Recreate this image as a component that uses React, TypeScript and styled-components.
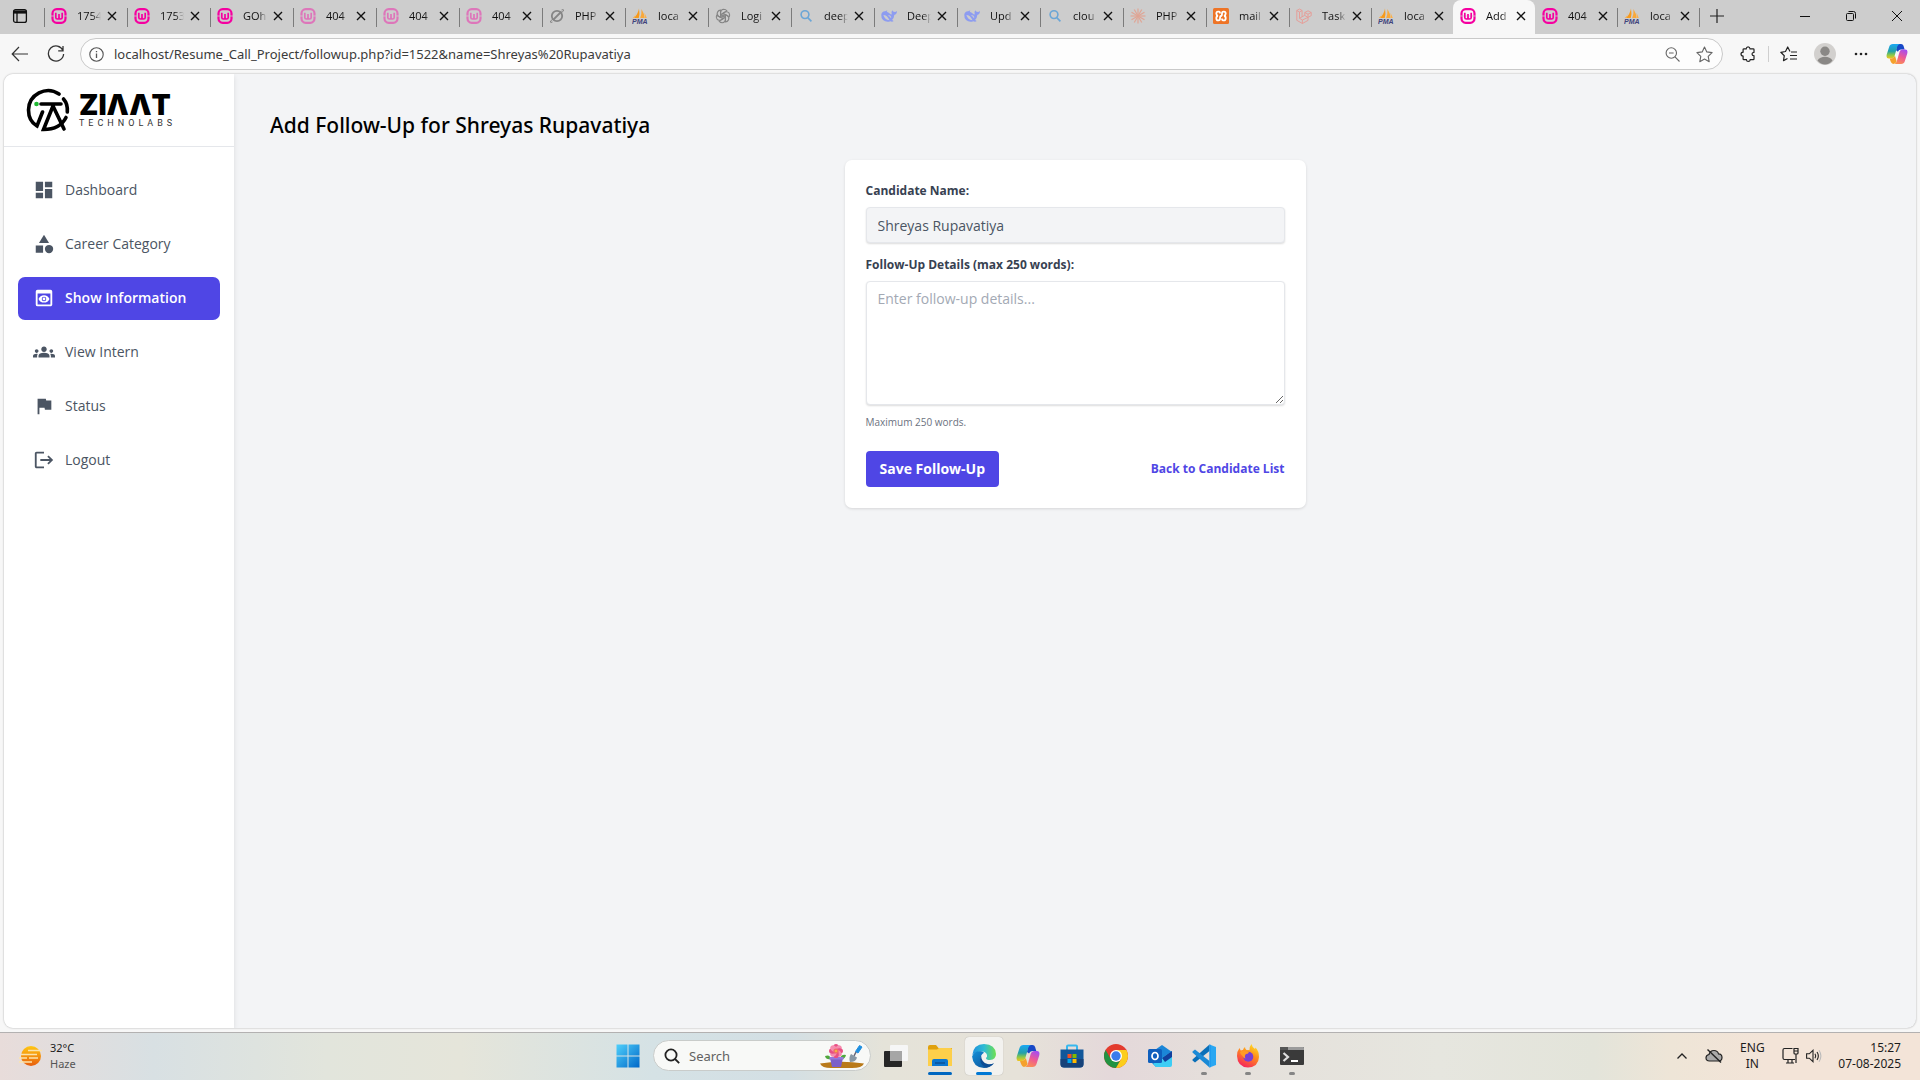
import React from 'react';
import styled, { createGlobalStyle, css } from 'styled-components';
import { MdDashboard, MdCategory, MdPreview, MdGroups, MdFlag, MdLogout } from 'react-icons/md';

const ui = '"Open Sans", "Noto Sans", sans-serif';
const uiWide = '"Noto Sans", "Open Sans", sans-serif';

const GlobalStyle = createGlobalStyle`
  *, *::before, *::after { box-sizing: border-box; }
  body { margin: 0; font-family: ${ui}; background: #f7f7f7; }
  button, input, textarea { font-family: inherit; }
  button { border: 0; padding: 0; background: none; color: inherit; }
  svg { display: block; flex: none; }
`;

/* ---------- layout shells ---------- */
const Screen = styled.div`
  display: flex;
  flex-direction: column;
  min-height: 100vh;
`;

/* ---------- tab strip ---------- */
const TitleBar = styled.header`
  display: flex;
  height: 34px;
  padding-bottom: 2px;
  background: #cdcdcd;
  color: #111;
`;
const TabMenu = styled.button`
  width: 44px;
  padding-left: 12px;
`;
const TabList = styled.ul`
  display: flex;
  margin: 0 0 -2px;
  padding: 0;
  list-style: none;
`;
const TabItem = styled.li<{ $active?: boolean; $bare?: boolean }>`
  display: flex;
  align-items: center;
  width: 83px;
  padding: 0 0 2px 7px;
  background: linear-gradient(#7b7b7b, #7b7b7b) left 8px / 1px 19px no-repeat;
  &:nth-child(n + 16) { width: 82px; }
  ${p => p.$bare && css`background: none;`}
  ${p => p.$active && css`
    background: #f7f7f7;
    border-radius: 8px 8px 0 0;
  `}
`;
const TabIcon = styled.span<{ $faded?: boolean }>`
  opacity: ${p => (p.$faded ? 0.42 : 1)};
`;
const TabTitle = styled.button`
  width: 24px;
  height: 16px;
  margin-left: 10px;
  overflow: hidden;
  font-size: 11px;
  line-height: 16px;
  text-align: left;
  white-space: nowrap;
  mask-image: linear-gradient(90deg, #000 65%, transparent);
`;
const TabClose = styled.button`
  margin-left: 6px;
`;
const NewTab = styled.button`
  display: grid;
  place-items: center;
  width: 36px;
  background: linear-gradient(#7b7b7b, #7b7b7b) left 8px / 1px 19px no-repeat;
`;
const WindowControls = styled.div`
  display: flex;
  margin-left: auto;
`;
const WindowButton = styled.button`
  display: grid;
  place-items: center;
  width: 46px;
`;

/* ---------- address bar ---------- */
const Toolbar = styled.div`
  display: flex;
  align-items: center;
  height: 40px;
  padding-left: 2px;
  padding-right: 5px;
  color: #333;
`;
const ToolButton = styled.button<{ $w?: number }>`
  display: grid;
  place-items: center;
  width: ${p => p.$w ?? 36}px;
  height: 32px;
`;
const AddressBar = styled.div`
  display: flex;
  flex: 1;
  align-items: center;
  height: 32px;
  margin: 0 7px 0 6px;
  padding-left: 8px;
  padding-right: 2px;
  border: 1px solid #c9c9c9;
  border-radius: 16px;
  background: #fdfdfd;
  color: #555;
`;
const AddressInput = styled.input`
  flex: 1;
  min-width: 0;
  padding: 0;
  margin-left: 10px;
  border: 0;
  outline: 0;
  background: none;
  color: #3b3b3b;
  font-family: ${uiWide};
  font-size: 13px;
  line-height: 20px;
`;
const ToolDivider = styled.span`
  width: 1px;
  height: 16px;
  margin: 0 2px;
  background: #cfcfcf;
`;

/* ---------- web page ---------- */
const PageFrame = styled.div`
  display: flex;
  flex: 1;
  margin: 0 4px 4px;
  overflow: hidden;
  border-radius: 9px;
  background: #f3f4f6;
  box-shadow: 0 0 2px rgba(0, 0, 0, 0.35);
`;
const Sidebar = styled.aside`
  width: 230px;
  background: #fff;
  box-shadow: 0 2px 5px rgba(0, 0, 0, 0.1);
`;
const Brand = styled.div`
  display: flex;
  align-items: center;
  height: 73px;
  padding-left: 22px;
  border-bottom: 1px solid #e5e7eb;
`;
const BrandWords = styled.div`
  margin-left: 9px;
  color: #000;
  font-family: Inter, sans-serif;
`;
const BrandName = styled.div`
  font-size: 28px;
  font-weight: 900;
  line-height: 26px;
`;
const BrandSub = styled.div`
  color: #333;
  font-family: Roboto, sans-serif;
  font-size: 9px;
  letter-spacing: 4px;
  line-height: 10px;
`;
const Nav = styled.nav`
  display: flex;
  flex-direction: column;
  gap: 11px;
  padding: 22px 14px;
`;
const NavLink = styled.a<{ $active?: boolean }>`
  display: flex;
  align-items: center;
  gap: 10px;
  height: 43px;
  padding: 0 15px 2px;
  border-radius: 7px;
  color: ${p => (p.$active ? '#fff' : '#4b5563')};
  background: ${p => (p.$active ? '#4f46e5' : 'transparent')};
  font-size: 14px;
  font-weight: ${p => (p.$active ? 600 : 400)};
  line-height: 20px;
  text-decoration: none;
`;
const Main = styled.main`
  flex: 1;
  padding: 35px 36px;
`;
const Heading = styled.h1`
  margin: 0 0 19px;
  color: #000;
  font-family: ${uiWide};
  font-size: 21px;
  font-weight: 500;
  line-height: 32px;
`;
const Card = styled.form`
  display: flex;
  flex-direction: column;
  max-width: 461px;
  margin: 0 auto;
  padding: 21px;
  border-radius: 7px;
  background: #fff;
  box-shadow: 0 1px 3px rgba(0, 0, 0, 0.12);
`;
const Label = styled.label`
  margin-bottom: 6px;
  color: #374151;
  font-size: 12px;
  font-weight: 700;
  line-height: 20px;
`;
const field = css`
  width: 100%;
  padding: 7px 11px;
  border: 1px solid #e5e7eb;
  border-radius: 4px;
  box-shadow: 0 1px 2px rgba(0, 0, 0, 0.14);
  color: #4b5563;
  font-size: 14px;
  line-height: 20px;
  outline: 0;
`;
const TextField = styled.input`
  ${field}
  height: 36px;
  margin-bottom: 12px;
  background: #f3f4f6;
`;
const TextBox = styled.textarea`
  ${field}
  height: 124px;
  background: #fff;
  resize: both;
  &::placeholder { color: #a3a9b4; opacity: 1; }
`;
const Hint = styled.p`
  margin: 8px 0 20px;
  color: #6b7280;
  font-size: 10px;
  line-height: 18px;
`;
const Actions = styled.div`
  display: flex;
  align-items: center;
  justify-content: space-between;
`;
const SaveButton = styled.button`
  height: 36px;
  padding: 0 14px;
  border-radius: 4px;
  background: #4f46e5;
  color: #fff;
  font-size: 14px;
  font-weight: 700;
  line-height: 20px;
`;
const BackLink = styled.a`
  color: #4f46e5;
  font-size: 12px;
  font-weight: 700;
  line-height: 20px;
  text-decoration: none;
`;

/* ---------- taskbar ---------- */
const Taskbar = styled.footer`
  display: grid;
  grid-template-columns: 1fr auto 1fr;
  align-items: center;
  height: 48px;
  padding-bottom: 2px;
  border-top: 1px solid #b3b1b1;
  background: linear-gradient(90deg, #e8dcda 0%, #d8e0e3 8%, #e2e5dc 17%, #e5e5da 24%, #d5e2e5 34%, #d3dfe4 41%, #e5e3d9 46%, #e6e2d9 53%, #e4d8da 58%, #e5e0db 64%, #e6e6df 75%, #e3e4da 83%, #eee5d7 87%, #f3e4d8 92%, #f3e4d8 100%);
  color: #1c1c1c;
  font-family: ${uiWide};
  font-size: 12px;
  line-height: 16px;
`;
const Weather = styled.button`
  display: flex;
  align-items: center;
  gap: 8px;
  padding-left: 18px;
  font-size: 11px;
  line-height: 16px;
  text-align: left;
`;
const Muted = styled.span`
  display: block;
  color: #555;
`;
const Dock = styled.div`
  display: flex;
  align-items: center;
  gap: 6px;
`;
const DockButton = styled.button<{ $open?: boolean }>`
  position: relative;
  display: grid;
  place-items: center;
  width: 38px;
  height: 38px;
  border-radius: 4px;
  background: ${p => (p.$open ? '#f3f2ef' : 'none')};
  box-shadow: ${p => (p.$open ? '0 0 1px rgba(0,0,0,.3)' : 'none')};
`;
const RunMark = styled.span<{ $w: number; $c: string }>`
  position: absolute;
  bottom: 0;
  left: 50%;
  width: ${p => p.$w}px;
  height: 3px;
  margin-left: ${p => -p.$w / 2}px;
  border-radius: 2px;
  background: ${p => p.$c};
`;
const SearchBox = styled.label`
  display: flex;
  align-items: center;
  width: 218px;
  height: 31px;
  padding: 0 5px 0 10px;
  border: 1px solid #c9ccca;
  border-radius: 16px;
  background: #f8f9f7;
`;
const SearchInput = styled.input`
  flex: 1;
  min-width: 0;
  margin-left: 9px;
  padding: 0;
  border: 0;
  outline: 0;
  background: none;
  font-size: 13px;
  line-height: 18px;
  &::placeholder { color: #626262; opacity: 1; }
`;
const Tray = styled.div`
  display: flex;
  align-items: center;
  justify-content: flex-end;
  padding-right: 19px;
`;
const TrayButton = styled.button<{ $w: number }>`
  display: grid;
  place-items: center;
  width: ${p => p.$w}px;
  font-size: 12px;
  line-height: 16px;
`;
const Clock = styled.div`
  margin-left: 16px;
  text-align: right;
`;

/* ---------- favicons ---------- */
const Wamp = () => (
  <svg width="16" height="16" viewBox="0 0 16 16" fill="none">
    <rect x="1.500" y="1.200" width="13" height="13.600" rx="4.200" stroke="#f500a0" strokeWidth="2.200" />
    <path d="M0 8h16" stroke="#cdcdcd" strokeWidth="0.800" />
    <path d="M4.800 4.800v4.600q0 1.600 1.600 1.600T8 9.400V6M8 9.400q0 1.600 1.600 1.600t1.600-1.600V4.800" stroke="#f500a0" strokeWidth="1.700" />
  </svg>
);
const Pma = () => (
  <svg width="16" height="16" viewBox="0 0 16 16">
    <path d="M7 0.500Q8 6 6.800 10H2Q6 6 7 .500Z" fill="#f79a1c" />
    <path d="M9.500 1Q12.500 6 12.600 10H8.200Q9.800 6 9.500 1Z" fill="#f9a83a" />
    <path d="M3.600 4.500Q3.600 8 .8 10h2Z M12.600 5Q14 8 14.800 10h-2Z" fill="#fbb04a" />
    <text x="0" y="15.800" fontFamily="Liberation Sans, sans-serif" fontWeight="700" fontStyle="italic" fontSize="7" fill="#40427c">PMA</text>
  </svg>
);
const Ban = () => (
  <svg width="16" height="16" viewBox="0 0 16 16" fill="none" stroke="#858585" strokeWidth="1.800">
    <circle cx="8" cy="8" r="5.200" /><path d="M4 12 12.500 3.500" />
    <path d="M3.500 14Q1 15.500 1.500 13L4 11M12.500 2Q15 .6 14.500 3L12 5" strokeWidth="1" />
  </svg>
);
const Knot = () => (
  <svg width="16" height="16" viewBox="0 0 16 16" fill="none" stroke="#858585" strokeWidth="1.100">
    {[0, 60, 120, 180, 240, 300].map(a => (
      <path key={a} transform={`rotate(${a} 8 8)`} d="M5.600 9.500V4.200Q6 1.600 8.600 1.300q2.200 0 3.200 1.600L8 5.200v2.600" />
    ))}
  </svg>
);
const Lens = () => (
  <svg width="16" height="16" viewBox="0 0 16 16" fill="none" stroke="#6ba6d6" strokeWidth="1.600">
    <circle cx="7" cy="6.600" r="3.900" /><path d="m9.800 9.600 3.600 3.800" />
  </svg>
);
const Whale = () => (
  <svg width="16" height="16" viewBox="0 0 17 16">
    <path d="M.3 6.800Q.8 2.800 4.500 3q.8-.8 2.200-.8l-.6 1.300Q8.500 4.200 9.800 6q1.200.8 1.600-.2Q10.600 3.500 12 1.800q.8 1.600 2 1.800 1.500.3 3-1-.1 3.600-2.900 4.300-.2 3.400-2.200 5.200.5.900 1.600 1.200-1.700 1.300-3.500.3Q5.500 15.300 2.200 12.300 0 10 .3 6.800Z" fill="#8d9cf0" />
    <path d="M2.500 7q4 0 6.500 5.500Q4 12 2.500 7Z" fill="#cdcdcd" /><path d="M8 7.500q2 .2 2.500 2.200" stroke="#cdcdcd" strokeWidth="1.200" fill="none" />
  </svg>
);
const Burst = () => (
  <svg width="16" height="16" viewBox="0 0 16 16" stroke="#dfa595" strokeWidth="1.200">
    {[0, 30, 60, 90, 120, 150].map(a => (
      <path key={a} transform={`rotate(${a} 8 8)`} d="M8 .5v15" />
    ))}
  </svg>
);
const Xampp = () => (
  <svg width="16" height="16" viewBox="0 0 16 16" fill="none">
    <rect width="16" height="16" rx="1.500" fill="#ee7426" />
    <path d="M6 3.600H5Q3.300 3.600 3.300 5.600T5 8Q3.300 8 3.300 10.200T5 12.400h.5Q7 12.400 7 10.500 7 8 8 8t1-2.500q0-1.900 1.500-1.900h.5q1.700 0 1.700 2T11 8q1.700 0 1.700 2.200T11 12.400h-1M6 3.600Q7 3.600 7 5.500M9 10.500q0 1.900 1 1.900" stroke="#fff" strokeWidth="1.800" />
  </svg>
);
const Cubes = () => (
  <svg width="16" height="16" viewBox="0 0 16 16" fill="none" stroke="#e89a94" strokeWidth="0.900">
    <path d="M.8 2.500 3.500 1l2.600 1.500v6.300l2.700-1.500V4.500L12 2.800l3.200 1.700v3.200L12 9.400v3l-5.600 3.100-5.600-3.200ZM.8 2.500l2.700 1.500v6.300L6.400 12v3.500M3.500 10.300l2.600-1.500M6.400 12 12 9.400M8.800 4.500 12 6.200l3.200-1.700M12 6.200v3.200L8.800 7.500M3.500 4l2.600-1.500" />
  </svg>
);

const CloseGlyph = () => (
  <svg width="10" height="10" viewBox="0 0 10 10" stroke="#111" strokeWidth="1.400"><path d="m1 1 8 8M9 1 1 9" /></svg>
);

/* Copilot ribbon, shared by the toolbar and the dock */
const Copilot = ({ id, size = 24 }: { id: string; size?: number }) => (
  <svg width={size} height={size} viewBox="0 0 24 24">
    <defs>
      <linearGradient id={id + 'a'} x1="0" y1="0" x2="0" y2="1">
        <stop offset="0" stopColor="#1ba8f5" /><stop offset="0.500" stopColor="#23a0a8" /><stop offset="0.750" stopColor="#8ac84a" /><stop offset="1" stopColor="#f5c51c" />
      </linearGradient>
      <linearGradient id={id + 'b'} x1="0.700" y1="0" x2="0.300" y2="1">
        <stop offset="0" stopColor="#a64df0" /><stop offset="0.500" stopColor="#ee5a94" /><stop offset="1" stopColor="#fb9150" />
      </linearGradient>
    </defs>
    <path d="M12 1h4.500q2 0 2.600 2l1.200 4h-4Q14 7 13 9.500L11 8Z" fill="#1748c7" />
    <path d="M7.500 1H15q-2 .5-2.800 3L9.500 13.500q-.8 3.500-4 3.500H3Q-.2 17 .8 12.500L3.500 4Q4.400 1 7.500 1Z" fill={`url(#${id}a)`} />
    <path d="M16.500 23H9q2-.5 2.800-3l2.700-9.500q.8-3.500 4-3.500H21q3.200 0 2.200 4.500L20.500 20q-.9 3-4 3Z" fill={`url(#${id}b)`} />
    <path d="M4 17h2q2.500 0 3.800-3l1.800 6Q10.500 23 8 23 5.400 22.500 4 17Z" fill="#f5a12c" />
  </svg>
);

const TABS: { title: string; icon: () => React.JSX.Element; faded?: boolean }[] = [
  { title: '1754', icon: Wamp }, { title: '1753', icon: Wamp }, { title: 'GOh', icon: Wamp },
  { title: '404', icon: Wamp, faded: true }, { title: '404', icon: Wamp, faded: true }, { title: '404', icon: Wamp, faded: true },
  { title: 'PHP', icon: Ban }, { title: 'loca', icon: Pma }, { title: 'Logi', icon: Knot }, { title: 'deep', icon: Lens },
  { title: 'Deep', icon: Whale }, { title: 'Upd', icon: Whale }, { title: 'clou', icon: Lens }, { title: 'PHP', icon: Burst },
  { title: 'mail', icon: Xampp }, { title: 'Task', icon: Cubes }, { title: 'loca', icon: Pma }, { title: 'Add', icon: Wamp },
  { title: '404', icon: Wamp }, { title: 'loca', icon: Pma },
];
const ACTIVE_TAB = 17;

const NAV = [
  { label: 'Dashboard', Icon: MdDashboard },
  { label: 'Career Category', Icon: MdCategory },
  { label: 'Show Information', Icon: MdPreview, active: true },
  { label: 'View Intern', Icon: MdGroups },
  { label: 'Status', Icon: MdFlag },
  { label: 'Logout', Icon: MdLogout },
];

const LogoMark = () => (
  <svg width="44" height="44" viewBox="0 0 44 44" fill="none" stroke="#000" strokeWidth="3.600" strokeLinecap="round">
    <path d="M33 6A19.600 19.600 0 0 0 2.500 22Q2.500 33 11 38L16.500 24" />
    <path d="M37.500 11Q42 16 41.300 24" />
    <path d="M40 29.500Q34 41.500 17.500 41.500L27 18" />
    <path d="M27 18 38 41M15 16h20" />
    <circle cx="10.500" cy="16" r="2.300" fill="#1fb832" stroke="none" />
  </svg>
);

function TabStrip() {
  return (
    <TitleBar>
      <TabMenu aria-label="Tab actions">
        <svg width="16" height="16" viewBox="0 0 16 16" fill="none" stroke="#111" strokeWidth="1.300">
          <rect x="1.600" y="1.600" width="12.800" height="12.800" rx="2" /><path d="M1.600 4h12.800" strokeWidth="3.200" /><path d="M5 4v10" />
        </svg>
      </TabMenu>
      <TabList>
        {TABS.map(({ title, icon: Icon, faded }, i) => (
          <TabItem key={i} $active={i === ACTIVE_TAB} $bare={i === ACTIVE_TAB + 1}>
            <TabIcon $faded={faded}><Icon /></TabIcon>
            <TabTitle>{title}</TabTitle>
            <TabClose aria-label="Close tab"><CloseGlyph /></TabClose>
          </TabItem>
        ))}
      </TabList>
      <NewTab aria-label="New tab">
        <svg width="14" height="14" viewBox="0 0 14 14" stroke="#222" strokeWidth="1.200"><path d="M7 0v14M0 7h14" /></svg>
      </NewTab>
      <WindowControls>
        <WindowButton aria-label="Minimize"><svg width="10" height="10" viewBox="0 0 10 10" stroke="#111"><path d="M0 5.500h10" /></svg></WindowButton>
        <WindowButton aria-label="Restore">
          <svg width="10" height="10" viewBox="0 0 10 10" fill="none" stroke="#111"><rect x=".5" y="2.500" width="7" height="7" rx="1" /><path d="M2.500.500h5q2 0 2 2v5" /></svg>
        </WindowButton>
        <WindowButton aria-label="Close"><svg width="10" height="10" viewBox="0 0 10 10" stroke="#111"><path d="m0 0 10 10M10 0 0 10" /></svg></WindowButton>
      </WindowControls>
    </TitleBar>
  );
}

function AddressRow() {
  return (
    <Toolbar>
      <ToolButton aria-label="Back">
        <svg width="18" height="16" viewBox="0 0 18 16" fill="none" stroke="#333" strokeWidth="1.200"><path d="M17 8H1.500M8 1 1.200 8 8 15" /></svg>
      </ToolButton>
      <ToolButton aria-label="Reload">
        <svg width="18" height="18" viewBox="0 0 18 18" fill="none" stroke="#333" strokeWidth="1.300"><path d="M16 5.500A7.600 7.600 0 1 0 16.600 9M16 1v4.800h-4.800" /></svg>
      </ToolButton>
      <AddressBar>
        <svg width="15" height="15" viewBox="0 0 15 15" fill="none" stroke="#555" strokeWidth="1.100"><circle cx="7.500" cy="7.500" r="6.700" /><path d="M7.500 6.500v4.500M7.500 4v1.200" strokeWidth="1.300" /></svg>
        <AddressInput aria-label="Address" defaultValue="localhost/Resume_Call_Project/followup.php?id=1522&name=Shreyas%20Rupavatiya" />
        <ToolButton $w={32} aria-label="Zoom out">
          <svg width="15" height="15" viewBox="0 0 15 15" fill="none" stroke="#666" strokeWidth="1.100"><circle cx="6.300" cy="6" r="5.200" /><path d="m10 9.800 4.500 4.700M4 6h4.600" /></svg>
        </ToolButton>
        <ToolButton $w={32} aria-label="Add to favorites">
          <svg width="17" height="17" viewBox="0 0 17 17" fill="none" stroke="#666" strokeWidth="1.100" strokeLinejoin="round"><path d="m8.500 1 2.300 4.900 5.300.7-3.900 3.700 1 5.400-4.700-2.600-4.700 2.600 1-5.400L.9 6.600l5.300-.7Z" /></svg>
        </ToolButton>
      </AddressBar>
      <ToolButton aria-label="Extensions">
        <svg width="16" height="16" viewBox="0 0 16 16" fill="none" stroke="#222" strokeWidth="1.200"><path d="M3.500 2.800h2.700q.2-2 1.900-2t1.900 2h3.200q.8 0 .8.800v2.700q-2 .1-2 1.800t2 1.800v3q0 .8-.8.800h-3q-.2 1.700-1.900 1.700t-1.900-1.700H3.900q-.8 0-.8-.8v-2.700Q1 10 1 8.100t2.100-2V3.600q0-.8.8-.8Z" /></svg>
      </ToolButton>
      <ToolDivider />
      <ToolButton aria-label="Favorites">
        <svg width="18" height="16" viewBox="0 0 18 16" fill="none" stroke="#222" strokeWidth="1.200" strokeLinejoin="round"><path d="M10 5.500 7.700 1 5.500 5.500l-4.700.8 3.500 3.400-.8 4.900L7.500 12.500M11 6h6M10 9.500h7M10 13h7" /></svg>
      </ToolButton>
      <ToolButton aria-label="Profile">
        <svg width="22" height="22" viewBox="0 0 22 22"><circle cx="11" cy="11" r="11" fill="#d2d0ce" /><circle cx="11" cy="8.300" r="4.700" fill="#8a8886" /><path d="M3.500 17.500Q6 13.800 11 13.800t7.500 3.700Q15.500 21.500 11 21.500t-7.500-4Z" fill="#8a8886" /></svg>
      </ToolButton>
      <ToolButton aria-label="Settings and more">
        <svg width="14" height="4" viewBox="0 0 14 4" fill="#222"><circle cx="2" cy="2" r="1.300" /><circle cx="7" cy="2" r="1.300" /><circle cx="12" cy="2" r="1.300" /></svg>
      </ToolButton>
      <ToolButton aria-label="Copilot"><Copilot id="tool" size={22} /></ToolButton>
    </Toolbar>
  );
}

function WebPage() {
  return (
    <PageFrame>
      <Sidebar>
        <Brand>
          <LogoMark />
          <BrandWords>
            <BrandName>ZIΛΛT</BrandName>
            <BrandSub>TECHNOLABS</BrandSub>
          </BrandWords>
        </Brand>
        <Nav>
          {NAV.map(({ label, Icon, active }) => (
            <NavLink key={label} href="#" $active={active}><Icon size={22} />{label}</NavLink>
          ))}
        </Nav>
      </Sidebar>
      <Main>
        <Heading>Add Follow-Up for Shreyas Rupavatiya</Heading>
        <Card>
          <Label htmlFor="candidate">Candidate Name:</Label>
          <TextField id="candidate" readOnly value="Shreyas Rupavatiya" />
          <Label htmlFor="details">Follow-Up Details (max 250 words):</Label>
          <TextBox id="details" placeholder="Enter follow-up details..." />
          <Hint>Maximum 250 words.</Hint>
          <Actions>
            <SaveButton type="button">Save Follow-Up</SaveButton>
            <BackLink href="#">Back to Candidate List</BackLink>
          </Actions>
        </Card>
      </Main>
    </PageFrame>
  );
}

const icon24 = { width: 24, height: 24, viewBox: '0 0 24 24' };

const StartIcon = () => (
  <svg {...icon24}>
    <defs><linearGradient id="win" x1="0" y1="0" x2="1" y2="1"><stop offset="0" stopColor="#4fd0fb" /><stop offset="1" stopColor="#0067c8" /></linearGradient></defs>
    <path d="M.5.500h11v11H.5ZM12.500.500h11v11h-11ZM.5 12.500h11v11H.5ZM12.500 12.500h11v11h-11Z" fill="url(#win)" />
  </svg>
);
const Bouquet = () => (
  <svg width="46" height="24" viewBox="0 0 46 24">
    <path d="M1 19.500Q22 16 45 19.500q-2 4.500-12 4.500H12Q3 24 1 19.500Z" fill="#b97a1a" />
    <path d="M6 12q5-2 6 3-5 1-6-3ZM27 11q-5-1-6 4 5 1 6-4Z" fill="#4fa83a" />
    <path d="M11 14h13l-2 9h-9Z" fill="#7b5fc9" /><path d="M10.500 13h14v2.500h-14Z" fill="#9479dd" />
    <g>
      {[0, 45, 90, 135, 180, 225, 270, 315].map(a => (
        <ellipse key={a} cx="17" cy="3.600" rx="2.800" ry="3.600" transform={`rotate(${a} 17 7)`} fill={a % 90 ? '#f58cae' : '#e84f85'} />
      ))}
    </g>
    <circle cx="17" cy="7" r="2.600" fill="#f06a6a" /><circle cx="17" cy="7" r="1.300" fill="#f5b040" />
    <path d="m40.500 1.500 2.500 1.500-4 6-2.500-1.500Z" fill="#1e8fe0" stroke="#1e8fe0" strokeLinejoin="round" /><path d="m37 8-2 4" stroke="#667" strokeWidth="1.500" /><path d="m32 10 6 3.500q-1 4.500-7 4.500-1.500-4.500 1-8Z" fill="#8797a4" />
  </svg>
);
const TaskView = () => (
  <svg {...icon24}><rect x="0" y="7" width="18" height="16" rx="1" fill="#262626" /><rect x="6" y="1" width="18" height="16" rx="1" fill="#f6f6f6" /><path d="M6 7h12v10H6Z" fill="#a6a6a6" /></svg>
);
const Folder = () => (
  <svg {...icon24}><path d="M0 3q0-2 2-2h6l2.500 3H24v8H0Z" fill="#e0a10e" /><path d="M0 5.500h9L11 4h11.500Q24 4 24 5.500V22H0Z" fill="#fdcf4a" /><path d="M4 22v-5q0-2 2-2h12q2 0 2 2v5Z" fill="#0b76cf" /><path d="M7 18h10v2H7Z" fill="#0a5aa5" /></svg>
);
const EdgeIcon = () => (
  <svg {...icon24}>
    <defs>
      <linearGradient id="ed1" x1="0" y1="0.300" x2="1" y2="0.300"><stop offset="0" stopColor="#1f8fdc" /><stop offset="0.500" stopColor="#2fbcd4" /><stop offset="1" stopColor="#6fe04e" /></linearGradient>
      <linearGradient id="ed2" x1="0" y1="0" x2="1" y2="1"><stop offset="0" stopColor="#1390d8" /><stop offset="1" stopColor="#0c4a92" /></linearGradient>
    </defs>
    <path d="M.3 11Q1.500.200 12 0q11.500.5 12 10 0 5.500-6 6-4 0-4-2 1.500-1 1-3-1-3.500-5-3.500Q3 7.500.3 11Z" fill="url(#ed1)" />
    <path d="M.1 12.500Q2 6.500 9 7.200q2 .2 3 1.500-4 2-3 7 2 5.500 8.500 5 2.500-.3 4.500-1.500Q18.500 24 12 24 1 23.500.1 12.500Z" fill="url(#ed2)" />
    <path d="M9 11.500q-3 8.500 5 12 5-.8 8-4.300-3 1.500-6.500.8-6-1.500-6.500-8.500Z" fill="#0d4c94" />
  </svg>
);
const StoreIcon = () => (
  <svg {...icon24}>
    <path d="M7 6V2.500Q7 1.500 8 1.500h8q1 0 1 1V6" fill="none" stroke="#37b7ee" strokeWidth="2" />
    <path d="M.5 5.500h23V20q0 3.500-3.500 3.500H4Q.5 23.500.5 20Z" fill="#12579a" /><path d="M.5 15h23v5q0 3.500-3.500 3.500H4Q.5 23.500.5 20Z" fill="#174279" />
    <path d="M7.500 10H11.500v4h-4Z" fill="#f25022" /><path d="M12.500 10h4v4h-4Z" fill="#7fba00" /><path d="M7.500 15h4v4h-4Z" fill="#00a4ef" /><path d="M12.500 15h4v4h-4Z" fill="#ffb900" />
  </svg>
);
const ChromeIcon = () => (
  <svg {...icon24}>
    <circle cx="12" cy="12" r="12" fill="#e33b2e" />
    <path d="M1.600 6 6.800 15 12 18l-3 5.600A12 12 0 0 1 1.600 6Z" fill="#229342" /><path d="m7 15 5 3 4-1-4 7q-2 0-4-1Z" fill="#229342" />
    <path d="M17.200 15 12 24q11-.5 12-12 0-3-1.600-6H12Z" fill="#fccd1c" />
    <circle cx="12" cy="12" r="6" fill="#fff" /><circle cx="12" cy="12" r="4.700" fill="#3b7cec" />
  </svg>
);
const OutlookIcon = () => (
  <svg {...icon24}>
    <path d="M4 8 14 1l10 7v11l-6 4H8l-4-4Z" fill="#1b86d8" /><path d="M24 7v14q0 2-2 2H8l-3-3Z" fill="#3ccdf5" /><path d="M14 14 24 7v6l-7 5Z" fill="#123f9c" />
    <rect y="5" width="14" height="14" rx="1.500" fill="#0f5fbd" /><ellipse cx="7" cy="12" rx="3" ry="3.500" fill="none" stroke="#fff" strokeWidth="1.700" />
  </svg>
);
const CodeIcon = () => (
  <svg {...icon24}><path d="M17.500.500 24 3v18l-6.500 2.500Z" fill="#2aa7f2" /><path d="M17.500.500V7L3 18.500.500 16.500v-1Z" fill="#0a6fb8" /><path d="M17.500 23.500V17L3 5.500.500 7.500v1Z" fill="#1b8ad6" /><path d="M17.500.500 19 1v22l-1.500.500Z" fill="#1f9cf0" /></svg>
);
const FirefoxIcon = () => (
  <svg {...icon24}>
    <defs><linearGradient id="ff" x1="0.800" y1="0" x2="0.300" y2="1"><stop offset="0" stopColor="#ffe226" /><stop offset="0.450" stopColor="#ff8a1c" /><stop offset="1" stopColor="#f5215e" /></linearGradient></defs>
    <path d="M1 12Q1 7 3.500 4l1.200 2.500L7 6q.5-2 2-3 0 2 1.500 3h3Q13 3 15.500 0 16 3 19 5l.5-1.500Q23 7 23 13q-.5 10-11 10.500Q1.500 23 1 12Z" fill="url(#ff)" />
    <circle cx="12.300" cy="12.800" r="5" fill="#7a3fd3" /><path d="M4 8q3-2 6-.5 2 0 3 1-1.500 1.500-3 1.500-2 2-.5 4.500-2-.5-3-2.500Q4 10 4 8Z" fill="#ff9a26" />
  </svg>
);
const TerminalIcon = () => (
  <svg {...icon24}><path d="M0 4q0-1 1-1h22q1 0 1 1v16q0 1-1 1H1q-1 0-1-1Z" fill="#3a3a3a" /><path d="M8 3h15q1 0 1 1v2H8Z" fill="#9b9b9b" /><path d="M0 4q0-1 1-1h7v3H0Z" fill="#555" /><path d="m3.500 9 4.500 4-4.500 4" fill="none" stroke="#ddd" strokeWidth="2.200" /><path d="M11 17h7" stroke="#fff" strokeWidth="2" /></svg>
);
const WeatherIcon = () => (
  <svg width="24" height="24" viewBox="0 0 24 24">
    <defs><linearGradient id="sun" x1="0" y1="0" x2="0" y2="1"><stop offset="0" stopColor="#ffc814" /><stop offset="1" stopColor="#e85d0c" /></linearGradient></defs>
    <circle cx="13" cy="12" r="10" fill="url(#sun)" />
    <path d="M10 6.500h14M3 10.500h16M11 14h9M1 14h8M1 18h13" stroke="#fbe3ac" strokeWidth="1.400" />
  </svg>
);

const DOCK = [
  { name: 'Task View', Icon: TaskView },
  { name: 'File Explorer', Icon: Folder, mark: 24, color: '#0067c0' },
  { name: 'Edge', Icon: EdgeIcon, mark: 16, color: '#0078d4', open: true },
  { name: 'Copilot', Icon: () => <Copilot id="dock" /> },
  { name: 'Store', Icon: StoreIcon },
  { name: 'Chrome', Icon: ChromeIcon },
  { name: 'Outlook', Icon: OutlookIcon },
  { name: 'Code', Icon: CodeIcon, mark: 6, color: '#858585' },
  { name: 'Firefox', Icon: FirefoxIcon, mark: 6, color: '#858585' },
  { name: 'Terminal', Icon: TerminalIcon, mark: 6, color: '#858585' },
];

function BottomBar() {
  return (
    <Taskbar>
      <Weather><WeatherIcon /><span>32°C<Muted>Haze</Muted></span></Weather>
      <Dock>
        <DockButton aria-label="Start"><StartIcon /></DockButton>
        <SearchBox>
          <svg width="16" height="16" viewBox="0 0 16 16" fill="none" stroke="#222" strokeWidth="1.800"><circle cx="7" cy="7" r="5.600" /><path d="m11 11 4.200 4.200" /></svg>
          <SearchInput aria-label="Search" placeholder="Search" />
          <Bouquet />
        </SearchBox>
        {DOCK.map(({ name, Icon, mark, color, open }) => (
          <DockButton key={name} aria-label={name} $open={open}>
            <Icon />
            {mark && <RunMark $w={mark} $c={color!} />}
          </DockButton>
        ))}
      </Dock>
      <Tray>
        <TrayButton $w={32} aria-label="Show hidden icons"><svg width="10" height="6" viewBox="0 0 10 6" fill="none" stroke="#222" strokeWidth="1.300"><path d="m.500 5.500 4.500-4.500 4.500 4.500" /></svg></TrayButton>
        <TrayButton $w={32} aria-label="Cloud sync off">
          <svg width="18" height="14" viewBox="0 0 18 14"><path d="M4.500 12Q1 12 1 8.800 1 6 4 5.500 5 1.500 9 1.500q3.500 0 4.500 3.300 3.500.2 3.500 3.600T13.500 12Z" fill="#a9a9a9" stroke="#222" strokeWidth="1.200" /><path d="m2.500.500 13.500 13" stroke="#222" strokeWidth="1.400" /></svg>
        </TrayButton>
        <TrayButton $w={44}>ENG<br />IN</TrayButton>
        <TrayButton $w={32} aria-label="Network">
          <svg width="17" height="17" viewBox="0 0 17 17" fill="none" stroke="#222" strokeWidth="1.200"><path d="M10.500 1.500h-8q-1.500 0-1.500 1.500v8q0 1.500 1.500 1.500H13M4 16h8M6 12.500V16M10 12.500V16M12 1.500h4V6q0 1-1 1h-2q-1 0-1-1ZM14 7v9M12 4h4" /></svg>
        </TrayButton>
        <TrayButton $w={16} aria-label="Volume">
          <svg width="16" height="14" viewBox="0 0 16 14" fill="none" stroke="#222" strokeWidth="1.100"><path d="M.6 4.800h2.700L7 1.300v11.400L3.300 9.200H.600ZM9 4.800q1.500 2.200 0 4.400M11 3q2.700 4 0 8" /><path d="M13 1.300q3.800 5.700 0 11.400" stroke="#bbb" /></svg>
        </TrayButton>
        <Clock>15:27<br />07-08-2025</Clock>
      </Tray>
    </Taskbar>
  );
}

export default function App() {
  return (
    <Screen>
      <GlobalStyle />
      <TabStrip />
      <AddressRow />
      <WebPage />
      <BottomBar />
    </Screen>
  );
}
